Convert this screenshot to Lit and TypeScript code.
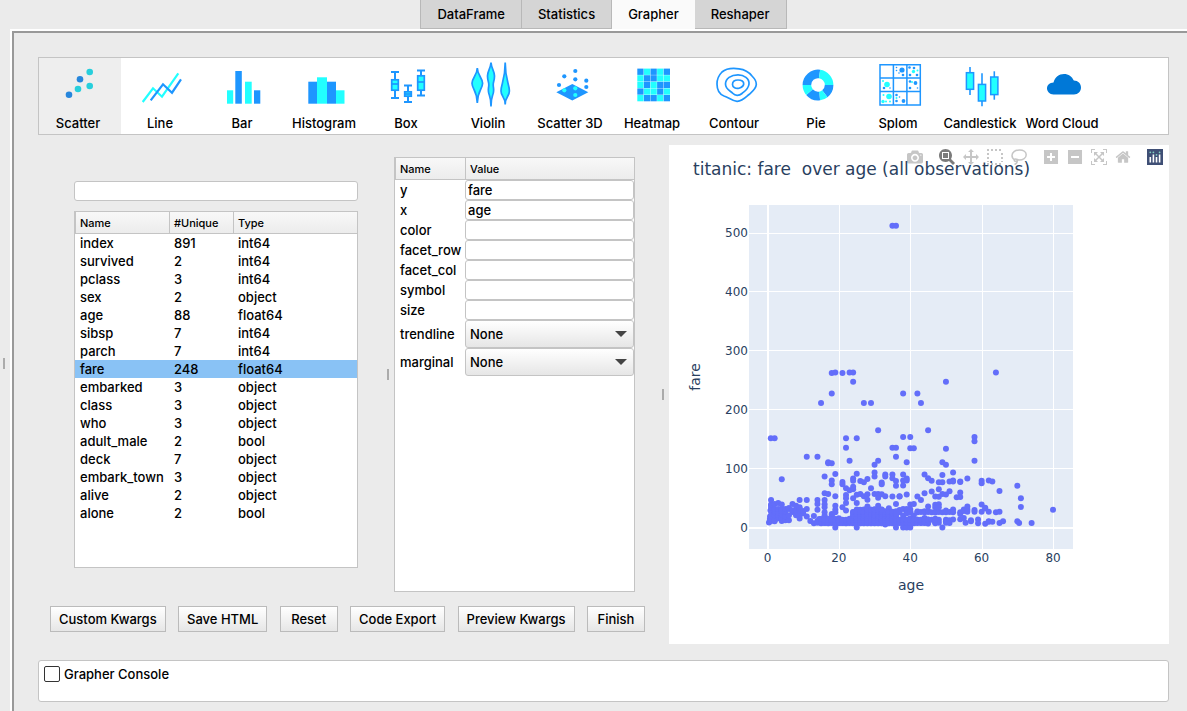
import { LitElement, html, svg, css } from "lit";
import { customElement, property, state } from "lit/decorators.js";
import { classMap } from "lit/directives/class-map.js";

const BLUE = "#1e96ff";
const CYAN = "#22ffff";

/* ---------- plot type icons, drawn in an 82 x 52 box ---------- */

const dots = (color: string, r: number, pts: number[][]) =>
  pts.map(([x, y]) => svg`<circle cx=${x} cy=${y} r=${r} fill=${color}></circle>`);

const bars = (items: [string, number, number, number, number][]) =>
  items.map(([c, x, y, w, h]) => svg`<rect x=${x} y=${y} width=${w} height=${h} fill=${c}></rect>`);

const boxPlot = (x: number, top: number, bottom: number, q1: number, q3: number, mid: number) => svg`
  <path d="M${x - 4} ${top + 1}h8M${x - 4} ${bottom - 1}h8M${x} ${top + 1}V${bottom - 1}" stroke=${BLUE} stroke-width="2"></path>
  <rect x=${x - 3.3} y=${q1 + 0.8} width="6.6" height=${q3 - q1 - 1.6} fill=${CYAN} stroke=${BLUE} stroke-width="1.7"></rect>
  <path d="M${x - 3.3} ${mid}h6.6" stroke=${BLUE} stroke-width="1.7"></path>`;

const candle = (x: number, top: number, bottom: number, open: number, close: number) => svg`
  <path d="M${x} ${top}V${bottom}" stroke=${BLUE} stroke-width="1.6"></path>
  <rect x=${x - 3.6} y=${open + 0.7} width="7.2" height=${close - open - 1.4} fill=${CYAN} stroke=${BLUE} stroke-width="1.5"></rect>`;

const arc = (color: string, from: number, to: number) => {
  const p = (r: number, a: number) => {
    const t = ((a - 90) * Math.PI) / 180;
    return `${(41 + r * Math.cos(t)).toFixed(2)} ${(27 + r * Math.sin(t)).toFixed(2)}`;
  };
  return svg`<path fill=${color} d="M${p(15.4, from)}A15.4 15.4 0 0 1 ${p(15.4, to)}L${p(6.8, to)}A6.8 6.8 0 0 0 ${p(6.8, from)}Z"></path>`;
};

const HEAT = ["bcbcb", "cbbcc", "cbcbb", "bccbc", "cbbcb"];

const icons: Record<string, unknown> = {
  Scatter: svg`${dots("#2686dc", 3.3, [[30, 36.7], [41, 21.3]])}${dots("#27cfdc", 3.3, [[39, 31], [50.7, 28], [50.7, 14]])}`,
  Line: svg`<g fill="none" stroke-width="2.2">
    <path stroke=${CYAN} d="M21.7 44L32 30.3L41 38.7L57.3 15.3"></path>
    <path stroke=${BLUE} d="M29.7 42.3L42 26.3L51 34.7L60 21.3"></path></g>`,
  Bar: bars([[CYAN, 24, 32.3, 6.2, 13.4], [BLUE, 32.3, 13, 6.5, 32.7], [CYAN, 42, 23.7, 6.7, 22], [BLUE, 51, 32.3, 6.3, 13.4]]),
  Histogram: bars([[BLUE, 23.3, 23.7, 8.7, 22], [CYAN, 32, 19.3, 10, 26.4], [BLUE, 42, 23.7, 9, 22], [CYAN, 51, 32.3, 8.5, 13.4]]),
  Box: svg`${boxPlot(28, 13, 41, 21, 33, 26)}${boxPlot(41, 26.5, 45, 33, 39, 36)}${boxPlot(54, 11.5, 38.5, 17, 33, 24)}`,
  Violin: svg`<g fill=${CYAN} stroke=${BLUE} stroke-width="1.7">
    <path d="M28.3 10C28.3 17 23 20 23 25.3C23 31 28.3 33 28.3 45C28.3 33 33.6 31 33.6 25.3C33.6 20 28.3 17 28.3 10Z"></path>
    <path d="M42 4.5C41.500 11 38.500 13 38.500 18C38.500 23 40 24 39.800 27C39.600 31 39 30 39.500 34C40 38 42 38 42 48.500C42 38 44 38 44.500 34C45 30 44.400 31 44.200 27C44 24 45.500 23 45.500 18C45.500 13 42.500 11 42 4.500Z"></path>
    <path d="M56.200 4.500C56.200 22 52 26 52 33C52 39 56.200 38 56.200 46.500C56.200 38 60.400 39 60.400 33C60.400 26 56.200 22 56.200 4.500Z"></path></g>`,
  "Scatter 3D": svg`<path fill=${BLUE} d="M25.3 34.3L41.3 26L57.3 34.3L41.3 42.500Z"></path>
    ${dots(BLUE, 2.1, [[44.3, 13], [33.3, 18.3], [44.3, 21.3], [55.3, 22.7], [28, 27], [55.3, 29]])}
    ${dots(CYAN, 2.1, [[33.3, 32.3], [44.3, 30.3], [44.3, 37]])}`,
  Heatmap: HEAT.map((row, r) =>
    [...row].map(
      (c, i) => svg`<rect x=${24.3 + i * 6.6} y=${10.6 + r * 6.6} width="6.3" height="6.3" fill=${c === "b" ? BLUE : CYAN}></rect>`
    )
  ),
  Contour: svg`<g fill="none" stroke=${BLUE} stroke-width="1.7">
    <path d="M22 26C22 20 24 17 27 14C31 10.500 38 10 44 10.800C50 11.500 54 14 57 18C60 21 61.500 23 61.300 26.500C61 31 58 33 54 36.500C50 40 47 43.500 42 43.300C37 43 34 39.500 29 38C24 36 22 32 22 26Z"></path>
    <path d="M30.500 26C30.500 20.500 36 16.800 43 16.800C49 16.800 54.500 20.500 54 26C53.500 31 50 33 47 35.500C44 38 40 37.800 38 35.500C35 32.500 30.500 31.500 30.500 26Z"></path>
    <path d="M37.500 26.500C37.500 23.500 40 22 43 22C46.500 22 49 23.500 48.700 26C48.400 28 46.500 29.500 44 30.200C41 31 37.500 29.500 37.500 26.500Z"></path></g>`,
  Pie: svg`${arc(BLUE, 270, 368)}${arc(CYAN, 8, 90)}${arc(BLUE, 90, 142)}${arc(CYAN, 142, 172)}${arc(BLUE, 172, 230)}${arc(CYAN, 230, 270)}`,
  Splom: svg`<path fill="none" stroke=${BLUE} stroke-width="1.500" d="M21 6.700H61.300V47H21ZM34.400 6.700V47M47.900 6.700V47M21 20.100H61.300M21 33.600H61.300"></path>
    ${dots(BLUE, 2.6, [[43, 12]])}${dots(BLUE, 1.9, [[56.500, 25], [44.500, 43]])}
    ${dots(BLUE, 1.3, [[44, 17], [50.500, 9.500], [55, 10], [51, 17], [58, 17], [51, 30], [51, 23.500], [25, 30], [37.500, 37], [37.500, 43]])}
    ${dots(BLUE, 0.8, [[37.500, 9.500], [37.500, 12.500], [40, 15], [58.500, 30], [31, 30], [40.500, 39]])}
    ${dots(CYAN, 2.8, [[28, 26.500], [30, 38.500]])}${dots(CYAN, 1.7, [[54.500, 13.500], [24, 43.500]])}
    ${dots(CYAN, 1, [[24, 23], [53, 24], [58.500, 12.500], [24.500, 37], [27, 43.500], [31, 43.500], [37.500, 40]])}`,
  Candlestick: svg`${candle(29, 9, 37, 14, 32)}${candle(41, 15.300, 48.300, 25.700, 43.700)}${candle(53.300, 13.300, 41.700, 18.300, 37.300)}`,
  "Word Cloud": svg`<path fill="#0078d7" d="M30.500 36.500C26.500 36.500 24 33.500 24 30.300C24 26.800 26.800 24.500 30.500 24.400C31.800 19.500 36 16 41 16C45.500 16 49 18.500 50.800 22.600C55 22.600 58 25.600 58 29.500C58 33.500 55 36.500 51 36.500Z"></path>`,
};

const VARIABLES: [string, number, string][] = [
  ["index", 891, "int64"], ["survived", 2, "int64"], ["pclass", 3, "int64"], ["sex", 2, "object"],
  ["age", 88, "float64"], ["sibsp", 7, "int64"], ["parch", 7, "int64"], ["fare", 248, "float64"],
  ["embarked", 3, "object"], ["class", 3, "object"], ["who", 3, "object"], ["adult_male", 2, "bool"],
  ["deck", 7, "object"], ["embark_town", 3, "object"], ["alive", 2, "object"], ["alone", 2, "bool"],
];

/* fares observed at each age */
const FARES: [number, number[]][] = [
  [0.42, [8.5]], [0.67, [14.5]], [0.75, [19.3]], [0.83, [29, 18.8]], [0.92, [151.6]],
  [1, [11.1, 15.7, 20.6, 33, 37, 39, 46.9]],
  [2, [151.6, 10.5, 12.3, 21, 26, 27.9, 31.3, 39.7]],
  [3, [15.9, 18.8, 21.1, 26, 31.4, 41.6]],
  [4, [81.9, 11.1, 13.4, 16.7, 22, 27.9, 31.3, 39]],
  [5, [12.5, 19.3, 27.8, 31.4]], [6, [12.5, 21, 31.3, 33]], [7, [26.3, 29.1, 39.7]],
  [8, [21, 26.3, 29, 36.8]], [9, [15.2, 20.5, 27.9, 31.4, 34.4, 46.9]], [10, [24.2, 27.9]],
  [11, [120, 18.8, 31.3, 46.9]], [12, [11.2]], [13, [7.2, 19.5]],
  [14, [120, 46.9, 39.7, 30, 11.2, 7.9]], [14.5, [14.5]], [15, [211.3, 7.2, 8, 14.5]],
  [16, [86.5, 58, 46.9, 39.4, 34.4, 26, 20.2, 18, 10.5, 7.7]],
  [17, [110.9, 108.9, 57, 14.5, 12, 7.1]],
  [18, [262.4, 227.5, 108.9, 79.7, 73.5, 23, 20.2, 17.8, 13, 8]],
  [19, [263, 91, 53.1, 36.8, 30, 26, 14.5, 10.5, 8, 0]],
  [20, [15.7, 9.8, 7.2]], [21, [262.4, 77.3, 73.5, 34.4, 11.5, 7.8]],
  [22, [151.6, 135.6, 66.6, 55, 49.5, 41.6, 29, 10.5, 7.3]],
  [23, [263, 113.3, 63.4, 15, 11.5, 7.9]],
  [24, [263, 247.5, 83.2, 79.2, 69.3, 65, 49.5, 26, 18.8, 13, 7.8]],
  [25, [151.6, 91.1, 55.4, 41.6, 30.5, 26, 17.8, 7.7, 0]],
  [26, [78.9, 56.9, 30, 26, 20.6, 14.5, 7.8]], [27, [211.5, 76.7, 53.1, 30.5, 26, 21, 7.9]],
  [28, [82.2, 56.5, 47.1, 35.5, 33, 26.5, 13, 7.9]], [29, [211.3, 66.6, 30, 26, 21, 7.9]],
  [30, [106.4, 93.5, 86.5, 56.9, 31, 27.8, 24, 8]],
  [31, [164.9, 113.3, 57, 50.5, 37, 28.5, 26, 7.8]], [32, [76.3, 73.5, 56.5, 30.5, 26, 7.9]],
  [33, [90, 86.5, 53.1, 27.8, 26, 7.8, 5]], [34, [32.5, 26.5, 23, 13, 8]],
  [35, [512.3, 135.6, 90, 83.5, 52.6, 26.6, 8]],
  [36, [512.3, 135.6, 120, 78.9, 71, 40, 27.4, 15.6, 7.5, 0]],
  [37, [53.1, 52.6, 29.7, 26, 9.6, 7.9]],
  [38, [227.5, 153.5, 90, 80, 71.3, 31.4, 20, 13, 8.7, 7.1, 0]],
  [39, [110.9, 83.2, 79.7, 55.9, 31.3, 29.7, 26, 24.2, 13, 8, 0]],
  [40, [153.5, 134.5, 39, 31, 27.7, 26, 15.8, 13, 9.5, 0]],
  [41, [134.5, 39.7, 20.2, 14.1, 7.1]], [42, [227.5, 52.6, 27, 26, 13, 8.7]],
  [43, [211.3, 46.9, 26.3, 8]], [44, [90, 58, 27.7, 26, 16, 8]],
  [45, [164.9, 83.5, 35.5, 27.9, 26.5, 13.5, 7]], [46, [79.2, 61.2, 26]],
  [47, [52.6, 38.5, 34, 25.6, 15, 9, 7.3]], [48, [76.7, 65, 52, 39.6, 34.4, 26.5, 13, 7.9]],
  [49, [110.9, 89.1, 76.7, 56.9, 25.9, 0]],
  [50, [247.5, 133.7, 106.4, 55.9, 28.7, 26, 13, 10.5, 8]], [51, [78, 61.4, 26.5, 12.5, 7.8]],
  [52, [93.5, 79.7, 78.3, 30.5, 26, 13.5]], [53, [51.5]],
  [54, [78, 77.3, 59.4, 51.9, 26, 23, 14]], [55, [30.5, 16, 28]], [55.5, [8.1]],
  [56, [83.2, 35.5, 30.7, 26.6]], [57, [12.4, 10.5]], [58, [153.5, 146.5, 113.3, 29.7, 26.6]],
  [59, [13.5, 7.3]], [60, [79.2, 75.3, 39, 26.6]], [61, [33.5, 32.3, 6.2]],
  [62, [80, 26.6, 10.5, 9.7]], [63, [78, 9.6]], [64, [263, 26]], [65, [62, 26.6, 7.8]],
  [66, [10.5]], [70, [71, 10.5]], [70.5, [7.8]], [71, [49.5, 34.7]], [74, [7.8]], [80, [30]],
];
/* the crowded low fares shared by neighbouring ages */
const CROWDS: [number, number, number[]][] = [
  [16, 23, [7.8, 10.5, 13]], [24, 36, [7.3, 10.5, 13, 16.1, 20.2, 23.5, 26.5]],
  [28, 32, [30]], [37, 44, [7.8, 13]], [45, 47, [13]],
];

const px = (age: number) => 98.5 + age * 3.569;
const py = (fare: number) => 382.5 - fare * 0.589;

const MODEBAR: { name: string; group: number; d?: string; w?: number; on?: boolean }[] = [
  { name: "Download plot as a png", group: 0, w: 1000, d: "m500 450c-83 0-150-67-150-150 0-83 67-150 150-150 83 0 150 67 150 150 0 83-67 150-150 150z m400 150h-120c-16 0-34 13-39 29l-31 93c-6 15-23 28-40 28h-340c-16 0-34-13-39-28l-31-94c-6-15-23-28-40-28h-120c-55 0-100-45-100-100v-450c0-55 45-100 100-100h800c55 0 100 45 100 100v450c0 55-45 100-100 100z m-400-550c-138 0-250 112-250 250 0 138 112 250 250 250 138 0 250-112 250-250 0-138-112-250-250-250z m365 380c-19 0-35 16-35 35 0 19 16 35 35 35 19 0 35-16 35-35 0-19-16-35-35-35z" },
  { name: "Zoom", group: 1, w: 1000, on: true, d: "m1000-25l-250 251c40 63 63 138 63 218 0 224-182 406-407 406-224 0-406-182-406-406s183-406 407-406c80 0 155 22 218 62l250-250 125 125z m-812 250l0 438 437 0 0-438-437 0z m62 375l313 0 0-312-313 0 0 312z" },
  { name: "Pan", group: 1, w: 1000, d: "m1000 350l-187 188 0-125-250 0 0 250 125 0-188 187-187-187 125 0 0-250-250 0 0 125-188-188 186-187 0 125 252 0 0-250-125 0 187-188 188 188-125 0 0 250 250 0 0-126 187 188z" },
  { name: "Box Select", group: 1 },
  { name: "Lasso Select", group: 1 },
  { name: "Zoom in", group: 2, w: 875, d: "m1 787l0-875 875 0 0 875-875 0z m687-500l-187 0 0-187-125 0 0 187-188 0 0 125 188 0 0 187 125 0 0-187 187 0 0-125z" },
  { name: "Zoom out", group: 2, w: 875, d: "m0 788l0-876 876 0 0 876-876 0z m688-500l-500 0 0 125 500 0 0-125z" },
  { name: "Autoscale", group: 2, w: 1000, d: "m250 850l-187 0-63 0 0-62 0-188 63 0 0 188 187 0 0 62z m688 0l-188 0 0-62 188 0 0-188 62 0 0 188 0 62-62 0z m-875-938l0 188-63 0 0-188 0-62 63 0 187 0 0 62-187 0z m875 188l0-188-188 0 0-62 188 0 62 0 0 62 0 188-62 0z m-125 188l-1 0-93-94-156 156 156 156 92-93 2 0 0 250-250 0 0-2 93-92-156-156-156 156 94 92 0 2-250 0 0-250 0 0 93 93 157-156-157-156-93 94 0 0 0-250 250 0 0 0-94 93 156 157 156-157-93-93 0 0 250 0 0 250z" },
  { name: "Reset axes", group: 2, w: 928, d: "m786 296v-267q0-15-11-26t-25-10h-214v214h-143v-214h-214q-15 0-25 10t-11 26v267q0 1 0 2t0 2l321 264 321-264q1-1 1-4z m124 39l-34-41q-5-5-12-6h-2q-7 0-12 3l-386 322-386-322q-7-4-13-4-7 2-12 7l-35 41q-4 5-3 13t6 12l401 334q18 15 42 15t43-15l136-114v109q0 8 5 13t13 5h107q8 0 13-5t5-13v-227l122-102q5-5 6-12t-4-13z" },
  { name: "Produced with Plotly", group: 3 },
];

@customElement("scatter-plot")
export class ScatterPlot extends LitElement {
  @property() heading = "";

  static styles = css`
    :host { display: block; position: relative; background: #fff; }
    .plot { display: block; width: 100%; height: auto; font-family: "DejaVu Sans", Verdana, sans-serif; fill: #2a3f5f; }
    .title { font-size: 17px; white-space: pre; }
    .tick { font-size: 12px; }
    .axis { font-size: 14px; }
    .modebar { position: absolute; top: 4px; right: 2px; display: flex; gap: 8px; }
    .group { display: flex; }
    .tool { all: unset; display: block; width: 16px; height: 16px; padding: 0 4px; fill: #444; stroke: #444; opacity: 0.3; }
    .tool.on { opacity: 0.7; }
    .tool.brand { opacity: 1; }
    .tool svg { display: block; width: 16px; height: 16px; }
  `;

  private toolIcon(t: (typeof MODEBAR)[number]) {
    if (t.d)
      return html`<svg viewBox="0 0 ${t.w} 1000"><path stroke="none" transform="matrix(1 0 0 -1 0 850)" d=${t.d}></path></svg>`;
    if (t.name === "Box Select")
      return html`<svg viewBox="0 0 16 16"><path fill="none" stroke-width="2" stroke-dasharray="2 2" d="M0 1H16M0 15H16M1 4V13M15 4V13"></path></svg>`;
    if (t.name === "Lasso Select")
      return html`<svg viewBox="0 0 16 16"><path fill="none" stroke-width="1.500" d="M4 10.800C2 10 1 8 1 6.500C1 3.500 4 1 8.500 1C12.500 1 15.200 3 15.200 5.800C15.200 9 12 11 8 11C6.500 11 6 10 4.500 10C3 10 2.800 12 4.200 12.300C5.600 12.500 6.500 11.500 6.300 11C6.500 13 5 15 3.500 15.500"></path></svg>`;
    return html`<svg viewBox="0 0 16 16" stroke="none"><rect width="16" height="16" fill="#3f4f75"></rect>
      <g fill="#fff"><rect x="2.500" y="8" width="1.600" height="5.500"></rect><rect x="5.600" y="5.500" width="1.600" height="8"></rect><rect x="8.700" y="8" width="1.600" height="5.500"></rect><rect x="11.800" y="5.500" width="1.600" height="8"></rect></g>
      <g fill="#80cfbe"><circle cx="3.300" cy="3.300" r="0.900"></circle><circle cx="6.400" cy="3.300" r="0.900"></circle><circle cx="12.600" cy="3.300" r="0.900"></circle></g>
      <circle cx="9.500" cy="5.800" r="0.900" fill="#80cfbe"></circle></svg>`;
  }

  render() {
    const points: [number, number][] = [];
    for (const [age, fares] of FARES) for (const f of fares) points.push([age, f]);
    for (const [from, to, fares] of CROWDS)
      for (let a = from; a <= to; a++) for (const f of fares) points.push([a, f]);
    return html`
      <svg class="plot" viewBox="0 0 500 499" role="img" aria-label=${this.heading}>
        <rect x="80" y="60" width="324" height="344" fill="#e5ecf6"></rect>
        <g stroke="#fff">
          ${[20, 40, 60, 80].map((v) => svg`<path d="M${Math.round(px(v)) + 0.5} 60V404"></path>`)}
          ${[100, 200, 300, 400, 500].map((v) => svg`<path d="M80 ${Math.floor(py(v)) + 0.5}H404"></path>`)}
          <path stroke-width="2" d="M99 60V404M80 383H404"></path>
        </g>
        <g fill="#636efa">${points.map(([a, f]) => svg`<circle cx=${px(a)} cy=${py(f)} r="3"></circle>`)}</g>
        ${[0, 20, 40, 60, 80].map((v) => svg`<text class="tick" x=${px(v)} y="417" text-anchor="middle">${v}</text>`)}
        ${[0, 100, 200, 300, 400, 500].map((v) => svg`<text class="tick" x="79" y=${py(v) + 4} text-anchor="end">${v}</text>`)}
        <text class="axis" x="242" y="445" text-anchor="middle">age</text>
        <text class="axis" transform="translate(31 232) rotate(-90)" text-anchor="middle">fare</text>
        <text class="title" x="24" y="30">${this.heading}</text>
      </svg>
      <div class="modebar">
        ${[0, 1, 2, 3].map(
          (g) => html`<div class="group">
            ${MODEBAR.filter((t) => t.group === g).map(
              (t) => html`<button class=${classMap({ tool: true, on: !!t.on, brand: g === 3 })} aria-label=${t.name}>${this.toolIcon(t)}</button>`
            )}
          </div>`
        )}
      </div>`;
  }
}

@customElement("app-root")
export class AppRoot extends LitElement {
  @state() private tab = "Grapher";
  @state() private kind = "Scatter";
  @state() private selected = "fare";

  static styles = css`
    :host {
      display: flex; min-height: 100vh; background: #ebebeb; color: #000;
      font: 500 13px/18px Inter, "Liberation Sans", sans-serif;
    }
    * { box-sizing: border-box; }
    button, input, select { font: inherit; color: inherit; margin: 0; }

    .grip { flex: none; display: flex; align-items: center; justify-content: center; width: 12px; }
    .grip::before { content: ""; width: 2px; height: 11px; background: #ababab; }
    .grip.outer { width: 10px; padding: 16px 2px 0 0; }

    .window { flex: 1; min-width: 0; display: flex; flex-direction: column; }
    .tabs { display: flex; justify-content: center; height: 29px; padding-left: 10px; }
    .tab { height: 29px; padding: 0 16px; border: 1px solid #b8b8b8; border-width: 0 1px 1px 0; background: #d5d5d5; }
    .tab:first-child { border-left-width: 1px; }
    .tab.on { height: 31px; border: 0; padding-bottom: 4px; background: #fafafa; }
    .frame { flex: 1; display: flex; border: solid #fff; border-width: 2px 0 0 2px; }
    .page {
      flex: 1; min-width: 0; display: flex; flex-direction: column;
      padding: 24px 18px 9px 24px; border: solid #999; border-width: 2px 0 0 2px;
    }

    .kinds { display: flex; background: #fff; border: 1px solid #c4c4c4; }
    .kind { flex: 0 1 82px; min-width: 0; padding: 0; border: 0; background: none; display: flex; flex-direction: column; align-items: center; height: 76px; white-space: nowrap; }
    .kind.on { background: #eee; }
    .kind svg { display: block; width: 82px; height: 52px; flex: none; }
    .kind span { padding: 4px 4px 0 0; }

    .work { flex: 1; display: grid; grid-template-columns: minmax(0, 619fr) 12px minmax(0, 500fr); margin: 10px 0 16px; }
    .setup { display: flex; flex-direction: column; gap: 14px; padding: 12px 0; }
    .panes { flex: 1; display: flex; }
    .vars { flex: 1; display: flex; flex-direction: column; gap: 10px; padding: 24px 24px 24px 36px; }
    .field { display: block; width: 100%; height: 20px; padding: 0 2px; background: #fff; border: 1px solid #c4c4c4; border-radius: 3px; }
    .sheet { flex: 1; background: #fff; border: 1px solid #c4c4c4; }
    .sheet.args { flex: none; width: 241px; margin-right: 22px; }
    table { width: 100%; border-collapse: separate; border-spacing: 0; table-layout: fixed; }
    th {
      height: 22px; padding: 0 4px; text-align: left; font-size: 11px; font-weight: 500; line-height: 16px;
      background: linear-gradient(#f8f8f8, #ececec); border: solid #c4c4c4; border-width: 0 0 1px 1px;
    }
    td { height: 18px; padding: 0 0 0 5px; }
    .c1 { width: 94px; }
    .c2 { width: 64px; }
    .k1 { width: 70px; }
    tr.on td { background: #89c2f5; }
    .args td + td { padding: 0; }
    .pick { display: block; position: relative; }
    .pick::after {
      content: ""; position: absolute; right: 7px; top: 11px; pointer-events: none;
      border: solid transparent; border-width: 6px 6px 0; border-top-color: #444;
    }
    .choice {
      appearance: none; display: block; width: 100%; height: 28px; padding: 0 4px;
      background: linear-gradient(#fff, #e6e6e6); border: 1px solid #c4c4c4; border-radius: 3px;
    }
    .actions { display: flex; justify-content: space-between; padding: 0 12px; }
    .action { height: 26px; min-width: 58px; padding: 0 8px; border: 1px solid #bbb; background: linear-gradient(#fff, #e6e6e6); white-space: nowrap; }

    .console { height: 42px; padding: 4px 5px; background: #fff; border: 1px solid #c4c4c4; border-radius: 3px; }
    .toggle { display: flex; align-items: center; gap: 4px; width: max-content; }
    .check { appearance: none; width: 16px; height: 16px; border: 1px solid #333; border-radius: 2px; background: #fff; }
    .check:checked { background: #333; }
  `;

  render() {
    return html`
      <div class="grip outer"></div>
      <div class="window">
        <div class="tabs" role="tablist">
          ${["DataFrame", "Statistics", "Grapher", "Reshaper"].map(
            (t) => html`<button role="tab" aria-selected=${t === this.tab} class=${classMap({ tab: true, on: t === this.tab })} @click=${() => (this.tab = t)}>${t}</button>`
          )}
        </div>
        <div class="frame">
          <main class="page">
            <div class="kinds">
              ${Object.keys(icons).map(
                (k) => html`<button class=${classMap({ kind: true, on: k === this.kind })} @click=${() => (this.kind = k)}>
                  <svg viewBox="0 0 82 52">${icons[k]}</svg><span>${k}</span>
                </button>`
              )}
            </div>
            <div class="work">
              <section class="setup">
                <div class="panes">
                  <div class="vars">
                    <input class="field" type="search" aria-label="Filter variables" />
                    <div class="sheet">
                      <table>
                        <thead><tr><th class="c1">Name</th><th class="c2">#Unique</th><th>Type</th></tr></thead>
                        <tbody>
                          ${VARIABLES.map(
                            ([n, u, t]) => html`<tr class=${classMap({ on: n === this.selected })} @click=${() => (this.selected = n)}>
                              <td>${n}</td><td>${u}</td><td>${t}</td>
                            </tr>`
                          )}
                        </tbody>
                      </table>
                    </div>
                  </div>
                  <div class="grip"></div>
                  <div class="sheet args">
                    <table>
                      <thead><tr><th class="k1">Name</th><th>Value</th></tr></thead>
                      <tbody>
                        ${[["y", "fare"], ["x", "age"], ["color", ""], ["facet_row", ""], ["facet_col", ""], ["symbol", ""], ["size", ""]].map(
                          ([n, v]) => html`<tr>
                            <td><label for=${n}>${n}</label></td>
                            <td><input class="field" id=${n} type="text" .value=${v} /></td>
                          </tr>`
                        )}
                        ${["trendline", "marginal"].map(
                          (n) => html`<tr>
                            <td><label for=${n}>${n}</label></td>
                            <td><span class="pick"><select class="choice" id=${n}><option>None</option></select></span></td>
                          </tr>`
                        )}
                      </tbody>
                    </table>
                  </div>
                </div>
                <div class="actions">
                  ${["Custom Kwargs", "Save HTML", "Reset", "Code Export", "Preview Kwargs", "Finish"].map(
                    (a) => html`<button class="action">${a}</button>`
                  )}
                </div>
              </section>
              <div class="grip"></div>
              <scatter-plot heading=${"titanic: fare \u00a0over age (all observations)"}></scatter-plot>
            </div>
            <div class="console">
              <label class="toggle"><input class="check" type="checkbox" />Grapher Console</label>
            </div>
          </main>
        </div>
      </div>`;
  }
}
